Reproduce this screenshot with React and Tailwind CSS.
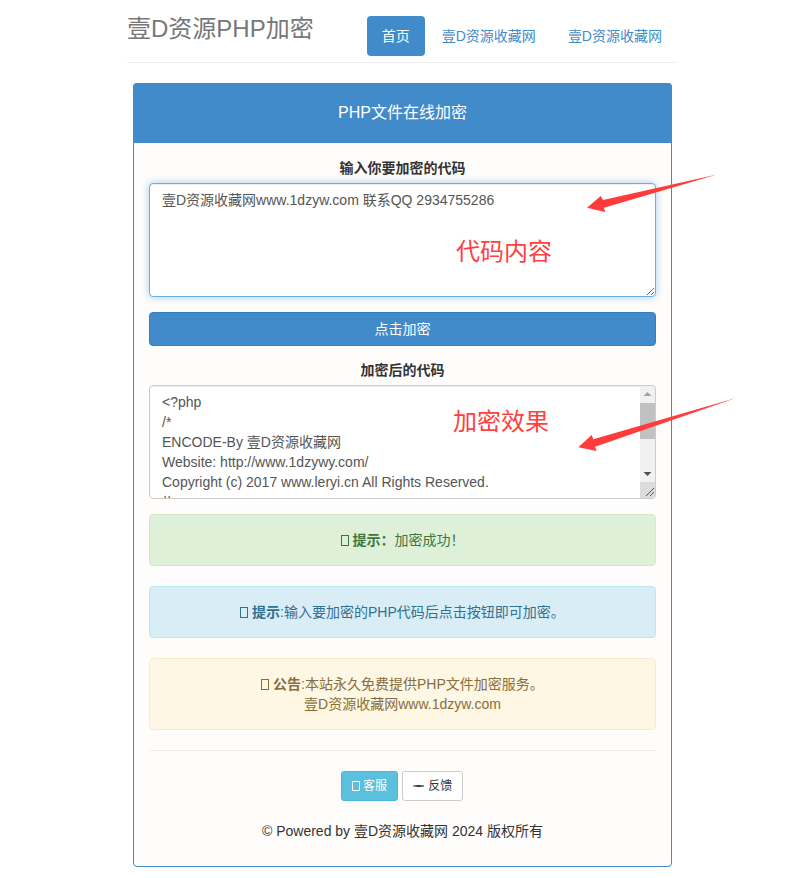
const fontStack = 'font-["Liberation_Sans","Noto_Sans_CJK_SC",sans-serif]'

function Tofu({ className = 'w-[8px] h-[11px]' }) {
  return <span className={`inline-block border border-current align-[-1px] ${className}`} />
}

function Alert({ tone, children }) {
  const tones = {
    success: 'bg-[#dff0d8] border-[#d6e9c6] text-[#3c763d]',
    info: 'bg-[#d9edf7] border-[#bce8f1] text-[#31708f]',
    warning: 'bg-[#fdf7e3] border-[#faebcc] text-[#8a6d3b]',
  }
  return (
    <div className={`mb-5 p-[15px] border rounded text-center ${tones[tone]}`}>
      {children}
    </div>
  )
}

const resultCode = `<?php
/*
ENCODE-By 壹D资源收藏网
Website: http://www.1dzywy.com/
Copyright (c) 2017 www.leryi.cn All Rights Reserved.
//
*/`

export default function App() {
  return (
    <div className={`relative w-[810px] h-[878px] overflow-hidden bg-white text-sm leading-5 text-[#333] ${fontStack}`}>
      <div className="ml-[127px] w-[550px]">
        <header className="flex justify-between h-[63px] pt-4 border-b border-[#eee]">
          <h3 className="text-2xl leading-[26px] text-[#777]">壹D资源PHP加密</h3>
          <nav className="flex gap-[2px] h-10">
            <a className="px-[15px] py-[10px] rounded bg-[#428bca] text-white">首页</a>
            <a className="px-[15px] py-[10px] text-[#428bca]">壹D资源收藏网</a>
            <a className="px-[15px] py-[10px] text-[#428bca]">壹D资源收藏网</a>
          </nav>
        </header>

        <main className="mt-5 mx-[6px] w-[539px] border border-[#428bca] rounded bg-[#fffdfb]">
          <div className="h-[60px] -mx-px -mt-px flex items-center justify-center rounded-t bg-[#428bca] text-base text-white">
            PHP文件在线加密
          </div>
          <div className="p-[15px]">
            <label className="block mb-[5px] text-center font-bold">输入你要加密的代码</label>
            <textarea
              readOnly
              defaultValue="壹D资源收藏网www.1dzyw.com 联系QQ 2934755286"
              className="block w-full h-[114px] mb-[15px] px-3 py-[6px] bg-white border border-[#66afe9] rounded text-[#555] outline-none resize-y shadow-[inset_0_1px_1px_rgba(0,0,0,0.075),0_0_8px_rgba(102,175,233,0.6)]"
            />
            <button className="block w-full h-[34px] mb-[14px] border border-[#357ebd] rounded bg-[#428bca] text-white">
              点击加密
            </button>
            <label className="block mb-[5px] text-center font-bold">加密后的代码</label>
            <div className="relative mb-[15px]">
              <textarea
                readOnly
                defaultValue={resultCode}
                className="block w-full h-[114px] px-3 py-[6px] bg-white border border-[#ccc] rounded text-[#555] outline-none overflow-hidden resize-none shadow-[inset_0_1px_1px_rgba(0,0,0,0.075)]"
              />
              {/* fake scrollbar over the textarea */}
              <div className="absolute top-px right-px bottom-px w-[15px] flex flex-col bg-[#f1f1f1] rounded-r">
                <svg width="15" height="17" viewBox="0 0 15 17" className="shrink-0">
                  <path d="M7.5 6 L11.5 10 L3.5 10 Z" fill="#a3a3a3" />
                </svg>
                <div className="h-9 shrink-0 bg-[#c1c1c1]" />
                <div className="flex-1" />
                <svg width="15" height="17" viewBox="0 0 15 17" className="shrink-0">
                  <path d="M3.5 7 L11.5 7 L7.5 11 Z" fill="#505050" />
                </svg>
                <svg width="15" height="16" viewBox="0 0 15 16" className="shrink-0 bg-[#dcdcdc]">
                  <path d="M6 14 L14 6 M10 14 L14 10" stroke="#555" strokeWidth="1" />
                </svg>
              </div>
            </div>

            <Alert tone="success">
              <Tofu /> <strong>{'提示\uFF1A'}</strong>{'加密成功\uFF01'}
            </Alert>
            <Alert tone="info">
              <Tofu /> <strong>提示</strong>:输入要加密的PHP代码后点击按钮即可加密。
            </Alert>
            <Alert tone="warning">
              <Tofu /> <strong>公告</strong>:本站永久免费提供PHP文件加密服务。<br />
              壹D资源收藏网www.1dzyw.com
            </Alert>

            <hr className="mb-5 border-[#eee]" />

            <div className="flex justify-center gap-1 pr-px text-xs leading-[18px]">
              <a className="px-[10px] py-[5px] border border-[#46b8da] rounded-[3px] bg-[#5bc0de] text-white">
                <Tofu className="w-[8px] h-[10px]" /> 客服
              </a>
              <a className="px-[10px] py-[5px] border border-[#ccc] rounded-[3px] bg-white text-[#333]">
                <span className="inline-block w-[11px] h-[2px] mr-px align-[3px] bg-gradient-to-r from-[#d9a0a6] via-[#333] to-[#7d9cc0]" /> 反馈
              </a>
            </div>

            <p className="mt-5 mb-[10px] text-center">© Powered by 壹D资源收藏网 2024 版权所有</p>
          </div>
        </main>
      </div>

      {/* red annotations drawn on top of the screenshot */}
      <span className="absolute left-[456px] top-[236px] text-2xl leading-8 text-[#ff4040]">代码内容</span>
      <span className="absolute left-[453px] top-[406px] text-2xl leading-8 text-[#ff4040]">加密效果</span>
      <svg width="810" height="878" className="absolute inset-0 pointer-events-none">
        <polygon points="717,174.5 603,200 600.7,196 587,207.7 605,212 604,207.7" fill="#ff3b3b" />
        <polygon points="736,398 593.3,439.3 591.7,435 578.3,447.3 596.7,451 595,446.7" fill="#ff3b3b" />
      </svg>
    </div>
  )
}
